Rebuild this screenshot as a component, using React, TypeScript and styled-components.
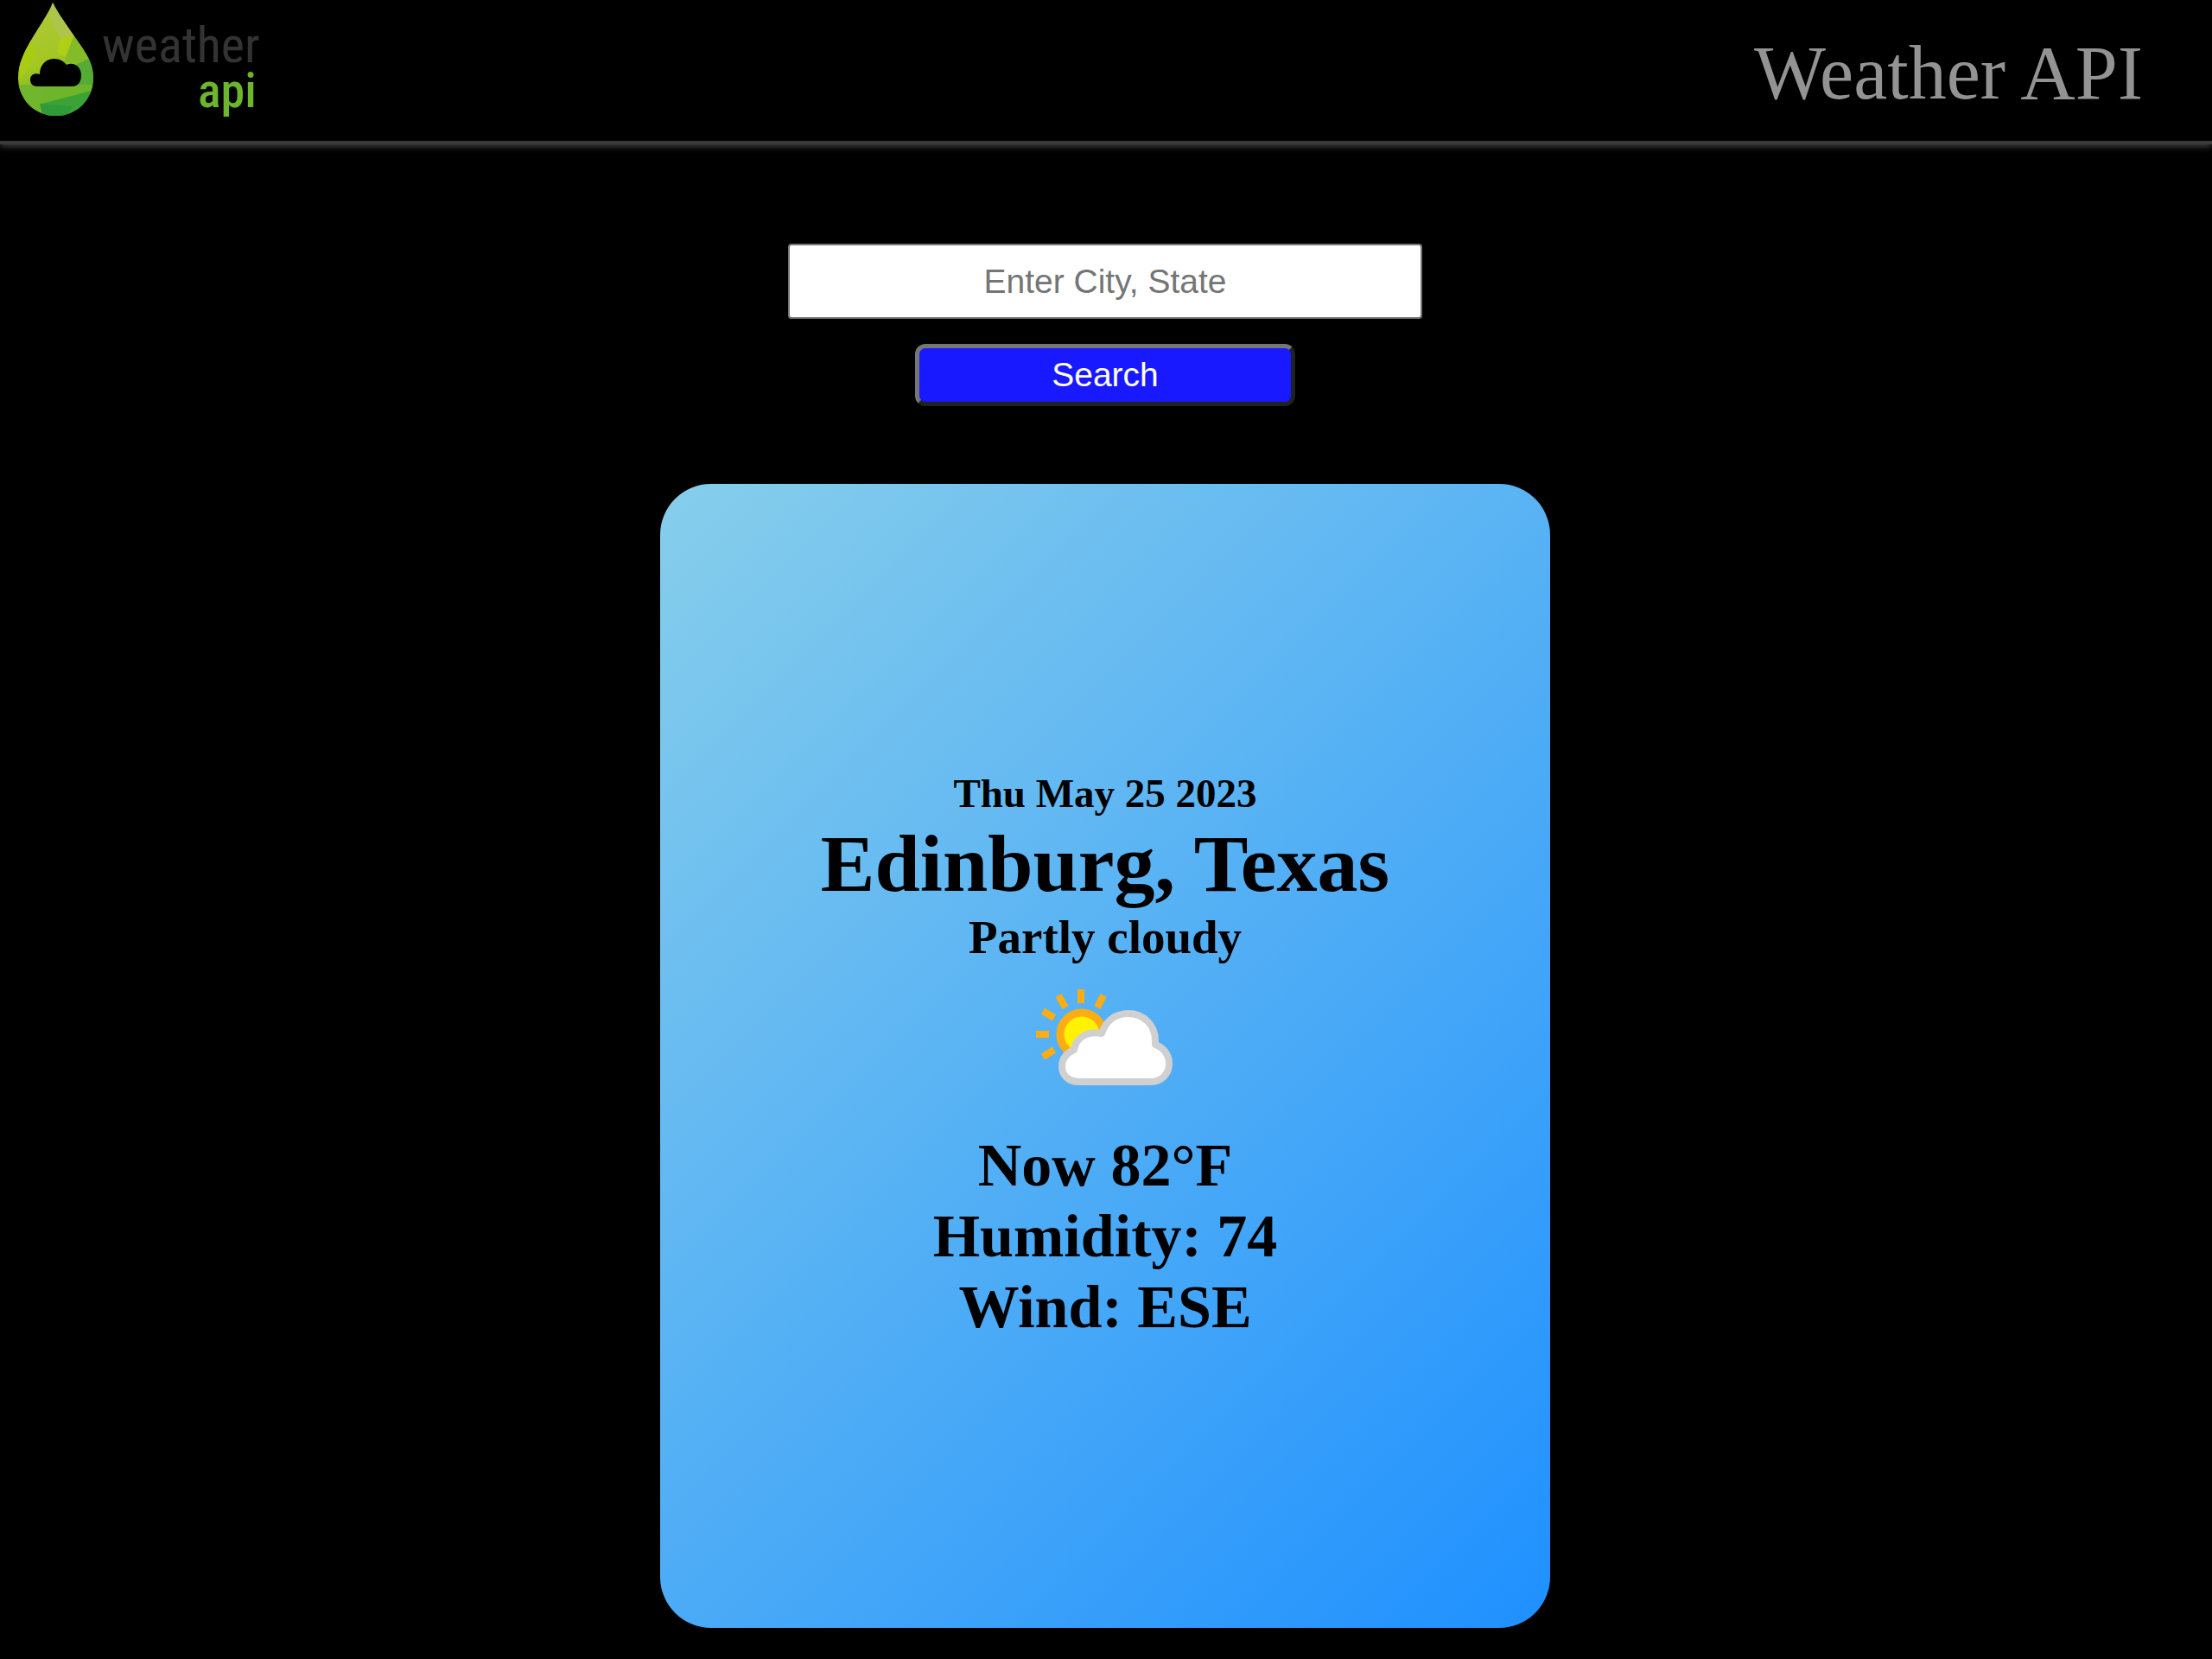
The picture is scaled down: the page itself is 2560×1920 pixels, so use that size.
import React from "react";
import styled, { createGlobalStyle } from "styled-components";

const GlobalStyle = createGlobalStyle`
  *, *::before, *::after { box-sizing: border-box; }
  body {
    margin: 0;
    background: #000;
    color: #000;
    font-family: "Liberation Serif", "Times New Roman", serif;
  }
`;

const Page = styled.div`
  min-height: 100vh;
  background: #000;
`;

const Header = styled.header`
  display: flex;
  justify-content: space-between;
  align-items: flex-start;
  padding: 0 80px 0 20px;
  border-bottom: 4px solid #393939;
  box-shadow: 0 2px 8px #4a4a4a;
`;

const LogoLink = styled.a`
  display: flex;
  gap: 8px;
  text-decoration: none;
`;

const DropMark = styled.svg`
  width: 90px;
  height: 136px;
`;

const LogoWords = styled.span`
  display: flex;
  flex-direction: column;
  align-items: flex-end;
  padding-top: 26px;
  font-family: "Roboto Condensed", "Liberation Sans Narrow", "Liberation Sans", sans-serif;
`;

const LogoWord = styled.span<{ $accent?: boolean }>`
  padding-right: ${(p) => (p.$accent ? 4 : 0)}px;
  font-size: ${(p) => (p.$accent ? 56 : 58)}px;
  line-height: 53px;
  font-weight: ${(p) => (p.$accent ? 500 : 400)};
  color: ${(p) => (p.$accent ? "#6cb52d" : "#333")};
`;

const Title = styled.h1`
  margin: 0;
  padding: 34px 0 28px;
  font-size: 88px;
  line-height: 101px;
  font-weight: 400;
  color: #939393;
`;

const Main = styled.main`
  display: flex;
  flex-direction: column;
  align-items: center;
  gap: 90px;
  padding: 115px 38px 36px 36px;
`;

const SearchForm = styled.form`
  display: flex;
  flex-direction: column;
  align-items: center;
  gap: 29px;
  width: 100%;
  max-width: 734px;
`;

const CityInput = styled.input`
  width: 100%;
  height: 87px;
  padding: 0 16px;
  border: 2px solid #767676;
  border-radius: 4px;
  background: #fff;
  color: #000;
  font-family: "Liberation Sans", Arial, sans-serif;
  font-size: 39px;
  text-align: center;

  &::placeholder { color: #757575; opacity: 1; }
`;

const SearchButton = styled.button`
  width: 60%;
  height: 72px;
  padding: 0;
  border: 5px solid;
  border-color: #767676 #212121 #212121 #767676;
  border-radius: 12px;
  background: #1919ff;
  color: #fff;
  font-family: "Liberation Sans", Arial, sans-serif;
  font-size: 39px;
  cursor: pointer;
`;

const Card = styled.article`
  display: flex;
  flex-direction: column;
  align-items: center;
  justify-content: center;
  width: 100%;
  max-width: 1030px;
  min-height: 1324px;
  border-radius: 59px;
  background: linear-gradient(135deg, skyblue, dodgerblue);
  text-align: center;
  font-weight: 700;
`;

const DateLine = styled.time`
  font-size: 47px;
  line-height: 54px;
`;

const City = styled.h2`
  margin: 0;
  font-size: 94px;
  line-height: 108px;
`;

const Condition = styled.p`
  margin: 0;
  font-size: 55px;
  line-height: 64px;
`;

const WeatherIcon = styled.svg`
  width: 160px;
  height: 157px;
  margin-bottom: 34px;
`;

const Reading = styled.p`
  margin: 0;
  font-size: 70px;
  line-height: 82px;
`;

const DROP = "M41 3 C46 14 58 30 68 45 C80 62 88 73 88 90 C88 115 69 134 45 134 C20 134 1 115 1 90 C1 74 8 60 18 43 C27 28 37 14 41 3 Z";

function Logo() {
  return (
    <LogoLink href="#">
      <DropMark viewBox="0 0 90 136" aria-hidden="true">
        <defs>
          <clipPath id="drop"><path d={DROP} /></clipPath>
          <linearGradient id="leaf" x1="0.3" y1="0" x2="0.6" y2="1">
            <stop offset="0" stopColor="#b1c83c" />
            <stop offset="0.5" stopColor="#a3c722" />
            <stop offset="1" stopColor="#4da52f" />
          </linearGradient>
        </defs>
        <g clipPath="url(#drop)">
          <rect width="90" height="136" fill="url(#leaf)" />
          <path d="M41 0 L66 42 L50 44 L38 20 Z" fill="#adc54c" />
          <path d="M50 44 L66 40 L56 66 L46 60 Z" fill="#b0d018" />
          <path d="M66 40 L90 66 L72 74 L54 72 Z" fill="#83bb2b" />
          <path d="M90 64 L90 112 L70 104 L66 76 Z" fill="#55ab33" />
          <path d="M0 98 L28 98 L26 120 L44 136 L20 136 Z" fill="#72b62e" />
          <path d="M26 98 L90 98 L90 107 L28 120 Z" fill="#6fb52b" />
          <path d="M28 120 L90 104 L90 136 L50 136 Z" fill="#3ba336" />
          <path d="M26 120 L64 123 L56 136 L30 136 Z" fill="#2f9a38" />
          <path d="M0 62 L16 46 L22 62 L4 92 Z" fill="#a8cc12" />
        </g>
        <path d="M23 100 C18 100 15 97 15 92 C15 87 20 84 26 86 C26 75 33 68 43 68 C49 68 54 71 57 75 C66 71 74 78 74 87 C74 95 70 100 64 100 Z" fill="#000" />
      </DropMark>
      <LogoWords>
        <LogoWord>weather</LogoWord>
        <LogoWord $accent>api</LogoWord>
      </LogoWords>
    </LogoLink>
  );
}

function PartlyCloudy() {
  return (
    <WeatherIcon viewBox="0 0 160 157" role="img" aria-label="Partly cloudy">
      <g stroke="#fbad13" strokeWidth="8">
        <path d="M52 28 V44" />
        <path d="M78 35 L71 49" />
        <path d="M26 35 L34 49" />
        <path d="M8 53 L21 61" />
        <path d="M0 80 H15" />
        <path d="M8 106 L21 98" />
      </g>
      <circle cx="53" cy="80" r="25" fill="#fff200" stroke="#fbad13" strokeWidth="9" />
      <path
        d="M50 135 C37 135 30 127 30 117 C30 108 36 101 44 98 C46 84 59 76 76 79 C81 64 92 56 107 56 C124 56 138 69 138 87 V92 C147 95 154 103 154 114 C154 126 145 135 133 135 Z"
        fill="#fff"
        stroke="#d0d0d0"
        strokeWidth="8"
        strokeLinejoin="round"
      />
    </WeatherIcon>
  );
}

export default function App() {
  return (
    <Page>
      <GlobalStyle />
      <Header>
        <Logo />
        <Title>Weather API</Title>
      </Header>
      <Main>
        <SearchForm onSubmit={(e) => e.preventDefault()}>
          <CityInput type="text" aria-label="City and state" placeholder="Enter City, State" />
          <SearchButton type="submit">Search</SearchButton>
        </SearchForm>
        <Card>
          <DateLine dateTime="2023-05-25">Thu May 25 2023</DateLine>
          <City>Edinburg, Texas</City>
          <Condition>Partly cloudy</Condition>
          <PartlyCloudy />
          <Reading>Now 82°F</Reading>
          <Reading>Humidity: 74</Reading>
          <Reading>Wind: ESE</Reading>
        </Card>
      </Main>
    </Page>
  );
}
